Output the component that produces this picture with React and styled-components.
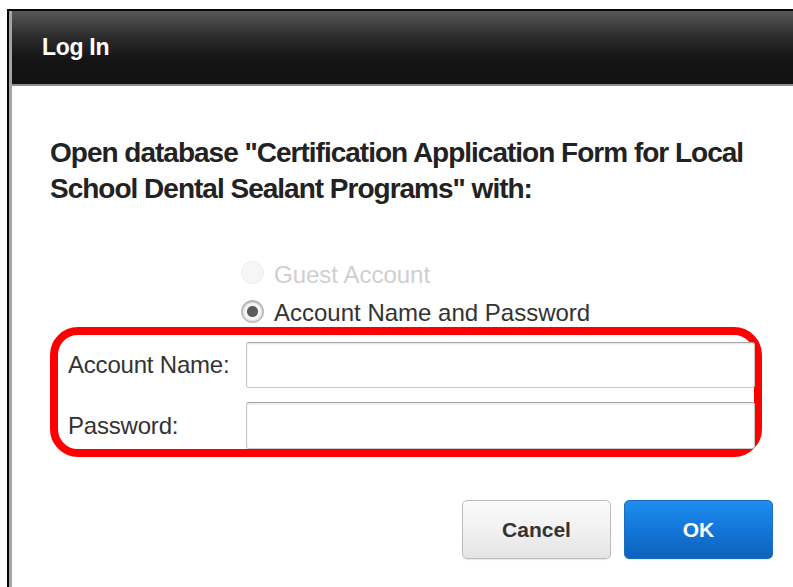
import React from "react";
import styled, { createGlobalStyle } from "styled-components";

const Global = createGlobalStyle`
  html, body { margin: 0; padding: 0; background: #fff; }
  body { font-family: "Liberation Sans", Arial, sans-serif; }
  * { box-sizing: border-box; }
`;

const Page = styled.div`
  width: 793px;
  height: 587px;
  overflow: hidden;
  padding: 9px 0 0 7px;
`;

const Window = styled.div`
  height: 100%;
  border-left: 2px solid #050505;
  border-top: 2px solid #0a0a0a;
`;

const Frame = styled.div`
  height: 100%;
  border-left: 3px solid #a4a4a4;
  display: flex;
  flex-direction: column;
`;

const TitleBar = styled.div`
  height: 75px;
  flex: none;
  display: flex;
  align-items: center;
  padding-left: 30px;
  background: linear-gradient(to bottom, #575757 0%, #2c2c2c 35%, #151515 65%, #121212 100%);
  border-bottom: 2px solid #8e8e8e;
`;

const Title = styled.h1`
  margin: 0;
  color: #fff;
  font-size: 23px;
  font-weight: bold;
  letter-spacing: -0.3px;
`;

const Body = styled.div`
  flex: 1;
  display: flex;
  flex-direction: column;
  padding: 49px 0 0 38px;
`;

const Prompt = styled.p`
  margin: 0;
  width: 720px;
  font-size: 28px;
  line-height: 36px;
  font-weight: bold;
  letter-spacing: -1px;
  color: #222;
`;

const Choices = styled.div`
  display: flex;
  flex-direction: column;
  gap: 14px;
  margin: 56px 0 0 191px;
`;

const Choice = styled.label`
  display: flex;
  align-items: center;
  gap: 10px;
  font-size: 24px;
  line-height: 24px;
  color: ${(p) => (p.$disabled ? "#cfcfcf" : "#333")};
`;

const RadioDot = styled.span`
  width: 23px;
  height: 23px;
  flex: none;
  border-radius: 50%;
  margin-top: ${(p) => (p.$disabled ? "-6px" : "-4px")};
  border: 1px solid ${(p) => (p.$disabled ? "#ececec" : "#a9a9a9")};
  background: ${(p) =>
    p.$disabled
      ? "#f6f6f6"
      : "radial-gradient(circle, #5a5a5a 0 5px, #f4f4f4 6px 8px, #d8d8d8 10px)"};
  box-shadow: ${(p) => (p.$disabled ? "none" : "inset 0 1px 2px rgba(0,0,0,0.2)")};
`;

const CredentialBox = styled.div`
  margin-top: 2px;
  width: 712px;
  height: 130px;
  border: 8px solid #ff0000;
  border-radius: 28px;
  padding: 7px 0 0 10px;
  display: flex;
  flex-direction: column;
  gap: 14px;
`;

const Field = styled.div`
  display: grid;
  grid-template-columns: 178px 1fr;
  align-items: center;
`;

const Label = styled.span`
  font-size: 24px;
  color: #333;
  letter-spacing: -0.2px;
`;

const Input = styled.input`
  height: ${(p) => p.$h || 46}px;
  border: 1px solid #c8c8c8;
  border-top-color: #a6a6a6;
  border-radius: 3px;
  background: #fff;
  box-shadow: inset 0 1px 2px rgba(0, 0, 0, 0.12);
  outline: none;
  font-size: 20px;
  margin-right: -1px;
`;

const Actions = styled.div`
  display: flex;
  justify-content: flex-end;
  gap: 13px;
  margin-top: 43px;
  padding-right: 20px;
`;

const Button = styled.button`
  width: 149px;
  height: 59px;
  border-radius: 5px;
  font-family: "Liberation Sans", Arial, sans-serif;
  font-size: 21px;
  font-weight: bold;
  cursor: pointer;
  border: 1px solid ${(p) => (p.$primary ? "#1d6dbf" : "#bdbdbd")};
  color: ${(p) => (p.$primary ? "#fff" : "#333")};
  background: ${(p) =>
    p.$primary
      ? "linear-gradient(to bottom, #1e8ef0 0%, #1376d8 50%, #0c62bc 100%)"
      : "linear-gradient(to bottom, #fbfbfb 0%, #f1f1f1 50%, #e4e4e4 100%)"};
  box-shadow: 0 1px 1px rgba(0, 0, 0, 0.1);
`;

export default function App() {
  return (
    <>
      <Global />
      <Page>
        <Window>
          <Frame>
            <TitleBar>
              <Title>Log In</Title>
            </TitleBar>
            <Body>
              <Prompt>
                Open database "Certification Application Form for Local School Dental Sealant Programs" with:
              </Prompt>
              <Choices>
                <Choice $disabled>
                  <RadioDot $disabled />
                  Guest Account
                </Choice>
                <Choice>
                  <RadioDot />
                  Account Name and Password
                </Choice>
              </Choices>
              <CredentialBox>
                <Field>
                  <Label>Account Name:</Label>
                  <Input type="text" $h={46} />
                </Field>
                <Field>
                  <Label>Password:</Label>
                  <Input type="password" $h={47} />
                </Field>
              </CredentialBox>
              <Actions>
                <Button type="button">Cancel</Button>
                <Button type="button" $primary>OK</Button>
              </Actions>
            </Body>
          </Frame>
        </Window>
      </Page>
    </>
  );
}
